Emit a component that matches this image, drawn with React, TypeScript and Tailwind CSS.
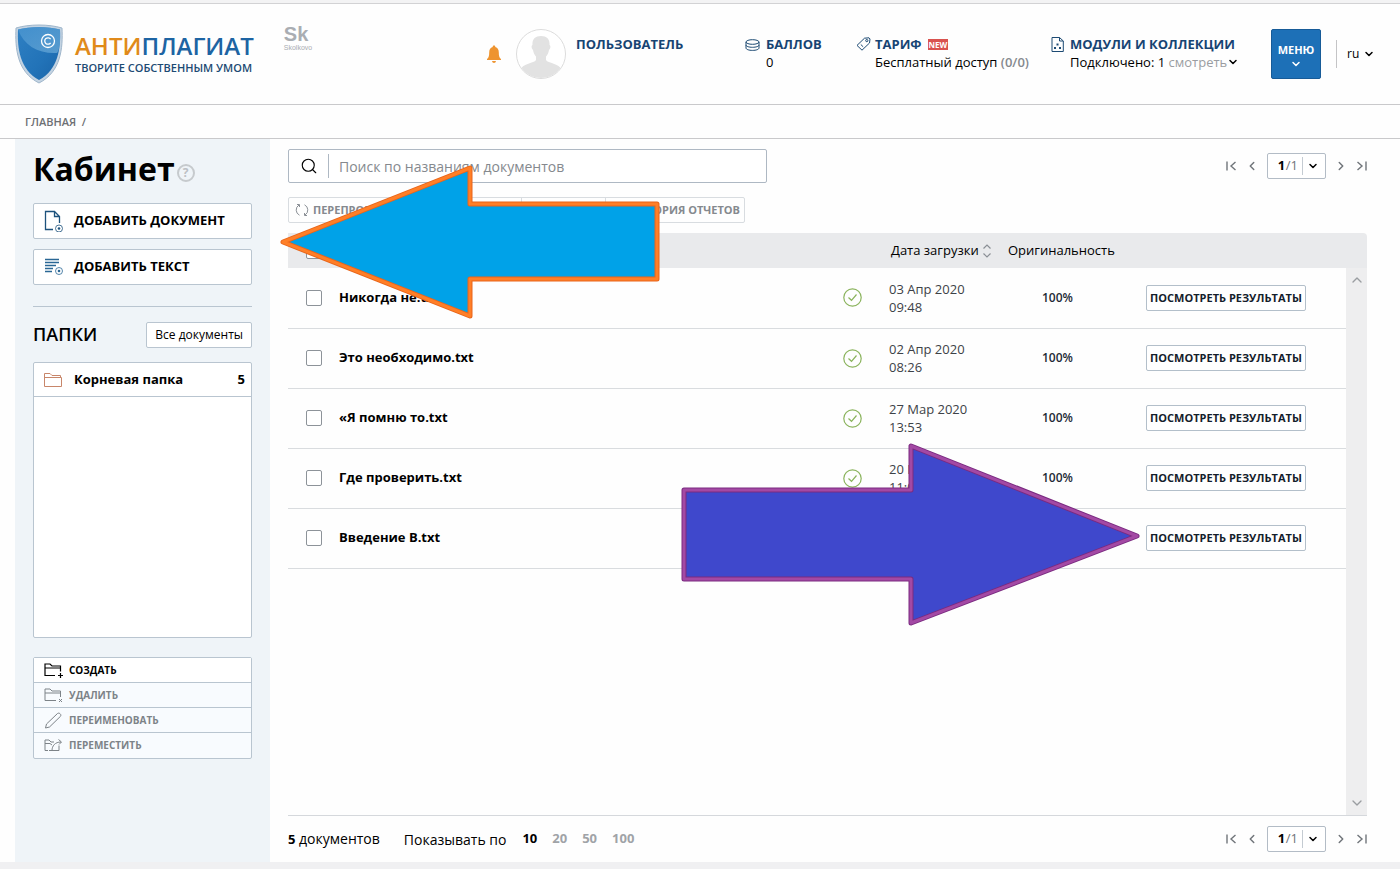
import { useState } from 'react';
import { ChevronDown, ChevronUp, ChevronLeft, ChevronRight, Search } from 'lucide-react';

type Doc = {
  id: number;
  name: string;
  date: string;
  time: string;
  score: string;
};

const docs: Doc[] = [
  { id: 1, name: 'Никогда не.txt', date: '03 Апр 2020', time: '09:48', score: '100%' },
  { id: 2, name: 'Это необходимо.txt', date: '02 Апр 2020', time: '08:26', score: '100%' },
  { id: 3, name: '«Я помню то.txt', date: '27 Мар 2020', time: '13:53', score: '100%' },
  { id: 4, name: 'Где проверить.txt', date: '20 Мар 2020', time: '11:05', score: '100%' },
  { id: 5, name: 'Введение В.txt', date: '20 Мар 2020', time: '10:42', score: '100%' },
];

const checkboxClass = 'block size-4 appearance-none rounded-xs border border-[#8d9399] bg-white checked:bg-[#1d70b7]';

/* ICONS */
const ShieldLogo = () => (
  <svg width="48" height="60" viewBox="0 0 48 60">
    <defs>
      <linearGradient id="shield" x1="0" y1="0" x2="1" y2="1">
        <stop offset="0" stopColor="#2f80c3" />
        <stop offset="0.6" stopColor="#2273b8" />
        <stop offset="1" stopColor="#1a64a8" />
      </linearGradient>
      <linearGradient id="shine" x1="0" y1="0" x2="1" y2="1">
        <stop offset="0" stopColor="#4f9ad4" />
        <stop offset="1" stopColor="#7db8e0" />
      </linearGradient>
    </defs>
    <path d="M1 4C14 0 34 0 47 4C48 24 46 48 24 59C2 48 0 24 1 4Z" fill="#c3d3e2" stroke="#9fb6cb" strokeWidth="1" />
    <path d="M3 5.500C15 2 33 2 45 5.500C46 24 43 46 24 56C5 46 2 24 3 5.500Z" fill="url(#shield)" />
    <path d="M3 5.500C15 2 33 2 45 5.500C45.500 15 45 25 42 29C24 30 9 22 3 5.500Z" fill="url(#shine)" opacity="0.6" />
    <circle cx="33" cy="17" r="6.500" fill="none" stroke="#fff" strokeWidth="1.300" />
    <path d="M35.600 15.200A3.200 3.200 0 1 0 35.600 18.800" fill="none" stroke="#fff" strokeWidth="1.300" />
  </svg>
);

const BellIcon = () => (
  <svg width="14" height="19" viewBox="0 0 14 19" fill="#ee9430">
    <path d="M7 0.500C7.800 0.500 8.300 1 8.300 1.900C10.800 2.500 11.800 4.500 11.800 7.500C11.800 11 12.300 12.600 14 14V15H0V14C1.700 12.600 2.200 11 2.200 7.500C2.200 4.500 3.200 2.500 5.700 1.900C5.700 1 6.200 0.500 7 0.500Z" />
    <path d="M5 16H9C8.800 17.300 8 18 7 18C6 18 5.200 17.300 5 16Z" />
  </svg>
);

const Avatar = () => (
  <svg width="50" height="50" viewBox="0 0 50 50">
    <defs>
      <clipPath id="round"><circle cx="25" cy="25" r="24" /></clipPath>
    </defs>
    <circle cx="25" cy="25" r="24.500" fill="#fff" stroke="#dcdcdc" />
    <path clipPath="url(#round)" fill="#e2e2e2" d="M25 7C31 7 34 10.500 33.500 16C35 16.500 34.500 20 33 21C32.500 24 31.500 26 30 27.500V31C32 34.500 43 34 46 41V50H4V41C7 34 18 34.500 20 31V27.500C18.500 26 17.500 24 17 21C15.500 20 15 16.500 16.500 16C16 10.500 19 7 25 7Z" />
  </svg>
);

const CoinsIcon = () => (
  <svg width="15" height="12" viewBox="0 0 15 12" fill="none" stroke="#1c4a73">
    <ellipse cx="7.500" cy="3" rx="6.500" ry="2.300" />
    <path d="M1 3V6C1 7.300 3.900 8.300 7.500 8.300S14 7.300 14 6V3M1 6V9C1 10.400 3.900 11.400 7.500 11.400S14 10.400 14 9V6" />
  </svg>
);

const TagIcon = () => (
  <svg width="15" height="14" viewBox="0 0 15 14" fill="none" stroke="#1c4a73">
    <path d="M8.500 1.200L13 0.800L14 2L13.500 6L6 13.200L1 8.400Z" strokeLinejoin="round" />
    <circle cx="10.800" cy="3.600" r="1.100" />
    <path d="M4.800 7.500L7.200 9.800" />
  </svg>
);

const ModulesIcon = () => (
  <svg width="13" height="15" viewBox="0 0 13 15" fill="none" stroke="#1c4a73">
    <path d="M1 0.500H8.500L12.300 4V14.500H1ZM8.500 0.500V4H12.300" />
    <g fill="#1c4a73" stroke="none">
      <rect x="5.500" y="6.500" width="2" height="2" />
      <rect x="3" y="10" width="2" height="2" />
      <rect x="8" y="10" width="2" height="2" />
    </g>
  </svg>
);

const AddDocIcon = () => (
  <svg width="20" height="22" viewBox="0 0 20 22" fill="none" stroke="#1d527c">
    <path d="M9 19.500H1.500V1.500H10.500L15.500 6.500V13M10.500 1.500V6.500H15.500" strokeWidth="1.300" />
    <circle cx="15" cy="18.500" r="3.500" strokeWidth="0.800" />
    <circle cx="15" cy="18.500" r="1.300" fill="#1d527c" stroke="none" />
  </svg>
);

const AddTextIcon = () => (
  <svg width="20" height="18" viewBox="0 0 20 18" fill="none" stroke="#2a6795">
    <path d="M1 1.500H15M1 4.500H15M1 7.500H12M1 10.500H9M1 13.500H8" strokeWidth="1.400" />
    <circle cx="15" cy="13" r="3.500" strokeWidth="0.800" />
    <circle cx="15" cy="13" r="1.300" fill="#2a6795" stroke="none" />
  </svg>
);

const FolderIcon = () => (
  <svg width="18" height="14" viewBox="0 0 18 14" fill="none" stroke="#c8866a">
    <path d="M0.500 13.500V0.500H6L8 2.500H16.500V4.500M0.500 13.500H17.500V4.500H0.500" />
  </svg>
);

const CreateIcon = () => (
  <svg width="19" height="15" viewBox="0 0 19 15" fill="none" stroke="currentColor">
    <path d="M11 12.500H1V1H6L8 3H16.500V8.500M1 5H16.500" strokeWidth="1.200" />
    <path d="M16.500 10V15M14 12.500H19" strokeWidth="1.200" />
  </svg>
);

const RemoveIcon = () => (
  <svg width="19" height="15" viewBox="0 0 19 15" fill="none" stroke="currentColor">
    <path d="M12 12.500H1V1H6L8 3H16.500V9M1 5H16.500" />
    <path d="M15 11L18 14M18 11L15 14" />
  </svg>
);

const PencilIcon = () => (
  <svg width="19" height="17" viewBox="0 0 19 17" fill="none" stroke="currentColor">
    <path d="M1.500 16L2.500 12L13.500 1.500C15 0.300 17.800 2.300 16.500 4.300L5.500 15Z" strokeLinejoin="round" />
  </svg>
);

const MoveIcon = () => (
  <svg width="19" height="13" viewBox="0 0 19 13" fill="none" stroke="currentColor">
    <path d="M4 11.500H1V1H5L7 3H10M1 4.500H6L8 6M5 11.500H15V6.500M8 11.500C8 7 11 3 17 3M14.500 0.500L17.500 3L15 5.500" />
  </svg>
);

const RecheckIcon = () => (
  <svg width="14" height="14" viewBox="0 0 14 14" fill="none" stroke="#8a8f95">
    <path d="M4.500 12.200A5.800 5.800 0 0 1 4 2M9.500 1.800A5.800 5.800 0 0 1 10 12" />
    <path d="M2 1.500H4.500V4M12 12.500H9.500V10" />
  </svg>
);

const CheckIcon = () => (
  <svg className="block" width="19" height="19" viewBox="0 0 19 19" fill="none" stroke="#8ab35c">
    <circle cx="9.500" cy="9.500" r="8.700" strokeWidth="1.200" />
    <path d="M5.500 9.500L8.500 12.300L13.500 6.500" strokeWidth="1.200" />
  </svg>
);

const SortIcon = () => (
  <svg width="8" height="14" viewBox="0 0 8 14" fill="none" stroke="#8a8f95" strokeWidth="1.200">
    <path d="M0.500 4.500L4 1L7.500 4.500M0.500 9.500L4 13L7.500 9.500" />
  </svg>
);

const EdgeIcon = ({ flip = false }: { flip?: boolean }) => (
  <svg className={flip ? 'rotate-180' : ''} width="11" height="10" viewBox="0 0 11 10" fill="none" stroke="#70757a" strokeWidth="1.400">
    <path d="M1 0.500V9.500M9.500 1L5 5L9.500 9" />
  </svg>
);

const Pager = ({ id }: { id: string }) => (
  <div className="flex items-center text-[#70757a]">
    <button aria-label="Первая"><EdgeIcon /></button>
    <button aria-label="Назад" className="ml-2"><ChevronLeft size={14} strokeWidth={2.5} /></button>
    <div className="ml-2 flex h-6.5 items-center rounded-xs border border-[#b3bcc6] bg-white pl-2.5 text-[13px]">
      <select id={id} aria-label="Страница" className="w-2 appearance-none font-bold text-black outline-none">
        <option>1</option>
      </select>
      <span>/1</span>
      <span className="ml-1 h-4.5 border-l border-[#c4cbd2]" />
      <ChevronDown className="mr-1.5 ml-1 text-black" size={12} strokeWidth={3} />
    </div>
    <button aria-label="Вперёд" className="ml-2"><ChevronRight size={14} strokeWidth={2.5} /></button>
    <button aria-label="Последняя" className="ml-2"><EdgeIcon flip /></button>
  </div>
);

const Header = () => (
  <header className="flex items-center border-b border-[#c9c9cb] py-5 pr-[25px] pl-[15px]">
    <a href="#" className="flex items-center gap-3">
      <ShieldLogo />
      <span className="block">
        <span className="block text-[24px] leading-7 font-semibold text-[#1d64a3]">
          <span className="text-[#e08a1a]">АНТИ</span>ПЛАГИАТ
        </span>
        <span className="block text-[11px] leading-4 font-semibold text-[#1c4a73]">ТВОРИТЕ СОБСТВЕННЫМ УМОМ</span>
      </span>
    </a>
    <a href="#" className="ml-[30px] self-start text-[#a9adb2]">
      <span className="block font-['Liberation_Sans',sans-serif] text-[20px] leading-5 font-bold">Sk</span>
      <span className="block font-['Liberation_Sans',sans-serif] text-[7px] leading-2">Skolkovo</span>
    </a>

    <div className="ml-auto flex items-center">
      <button aria-label="Уведомления"><BellIcon /></button>
      <div className="ml-[15px]"><Avatar /></div>
      <div className="ml-2.5 flex self-start pt-1.5 leading-[18px]">
        <a href="#" className="w-[169px] font-bold text-[#174473]">ПОЛЬЗОВАТЕЛЬ</a>
        <div className="flex w-[111px] gap-1.5">
          <span className="pt-1"><CoinsIcon /></span>
          <div>
            <a href="#" className="block font-bold text-[#174473]">БАЛЛОВ</a>
            <span className="block">0</span>
          </div>
        </div>
        <div className="flex w-[195px] gap-1">
          <span className="pt-0.5"><TagIcon /></span>
          <div>
            <div className="flex items-center gap-1.5">
              <a href="#" className="font-bold text-[#174473]">ТАРИФ</a>
              <span className="bg-[#d9534f] px-px text-[8px] leading-[11px] font-bold text-white">NEW</span>
            </div>
            <span className="block whitespace-nowrap">Бесплатный доступ <span className="font-semibold text-[#85898e]">(0/0)</span></span>
          </div>
        </div>
        <div className="flex w-[220px] gap-1.5">
          <span className="pt-0.5"><ModulesIcon /></span>
          <div>
            <a href="#" className="block font-bold text-[#174473]">МОДУЛИ И КОЛЛЕКЦИИ</a>
            <span className="flex items-center whitespace-nowrap">
              Подключено: 1&nbsp;<button className="flex items-center text-[#9a9da1]">смотреть<ChevronDown className="text-black" size={12} strokeWidth={3} /></button>
            </span>
          </div>
        </div>
      </div>
      <button className="flex size-12.5 flex-col items-center justify-center rounded-xs border border-[#175b98] bg-[#1d70b7] pt-1 text-[11px] leading-4 font-bold text-white">
        МЕНЮ
        <ChevronDown size={12} strokeWidth={3} />
      </button>
      <div className="ml-[15px] flex h-7 items-center border-l border-[#c4c4c6] pl-2.5 text-[12px]">
        <select aria-label="Язык" className="w-4 appearance-none outline-none">
          <option>ru</option>
        </select>
        <ChevronDown size={12} strokeWidth={3} />
      </div>
    </div>
  </header>
);

const Sidebar = () => (
  <aside className="w-[255px] shrink-0 bg-[#eff4f8] px-[18px] pt-1.5">
    <div className="flex items-center">
      <h1 className="text-[32px] leading-12 font-bold">Кабинет</h1>
      <button aria-label="Справка" className="mt-2 ml-0.5 flex size-[18px] items-center justify-center rounded-full border-2 border-[#c6cacd] text-[12px] leading-3 font-bold text-[#bcc0c4]">?</button>
    </div>

    <button className="mt-2.5 flex h-9 w-full items-center rounded-xs border border-[#b9c5d0] bg-white pl-2.5 font-bold">
      <AddDocIcon /><span className="ml-2.5">ДОБАВИТЬ ДОКУМЕНТ</span>
    </button>
    <button className="mt-2.5 flex h-9 w-full items-center rounded-xs border border-[#b9c5d0] bg-white pl-2.5 font-bold">
      <AddTextIcon /><span className="ml-2.5">ДОБАВИТЬ ТЕКСТ</span>
    </button>

    <hr className="mt-[21px] border-[#b9c5d0]" />

    <div className="mt-3.5 flex items-center justify-between">
      <h2 className="text-[18px] font-semibold">ПАПКИ</h2>
      <button className="h-6.5 rounded-xs border border-[#b9c5d0] bg-white px-2 text-[12px]">Все документы</button>
    </div>

    <div className="mt-3.5 h-69 rounded-xs border border-[#b9c5d0] bg-white">
      <button className="flex h-8.5 w-full items-center border-b border-[#b9c5d0] pr-1.5 pl-2.5 font-bold">
        <FolderIcon />
        <span className="ml-3">Корневая папка</span>
        <span className="ml-auto">5</span>
      </button>
    </div>

    {/* FOLDER ACTIONS */}
    <div className="mt-[19px] divide-y divide-[#b9c5d0] rounded-xs border border-[#b9c5d0] bg-[#f8fbfe] text-[10px] font-bold text-[#7d8388]">
      <button className="flex h-[25px] w-full items-center gap-1.5 bg-white pl-2.5 text-black"><CreateIcon />СОЗДАТЬ</button>
      <button className="flex h-[25px] w-full items-center gap-1.5 pl-2.5"><RemoveIcon />УДАЛИТЬ</button>
      <button className="flex h-[25px] w-full items-center gap-1.5 pl-2.5"><PencilIcon />ПЕРЕИМЕНОВАТЬ</button>
      <button className="flex h-[25px] w-full items-center gap-1.5 pl-2.5"><MoveIcon />ПЕРЕМЕСТИТЬ</button>
    </div>
  </aside>
);

const App = () => {
  const [selected, setSelected] = useState<number[]>([]);
  const [perPage, setPerPage] = useState(10);

  const toggle = (id: number) => {
    setSelected(selected.includes(id) ? selected.filter(s => s !== id) : [...selected, id]);
  };

  const toggleAll = () => {
    setSelected(selected.length === docs.length ? [] : docs.map(d => d.id));
  };

  return (
    <div className="relative flex min-h-screen flex-col border-t-3 border-b-7 border-t-[#f3f3f4] border-b-[#f0f0f2] bg-[#fefefe] font-['Open_Sans',sans-serif] text-[13px] text-black">
      <div className="border-t border-[#d2d2d4]" />
      <Header />

      <nav className="border-b border-[#c9c9cb] px-[25px] text-[11px] leading-[33px] font-semibold text-[#6d7074]">
        <a href="#">ГЛАВНАЯ</a>&nbsp; /
      </nav>

      <div className="flex flex-1 pl-[15px]">
        <Sidebar />

        <main className="flex min-w-0 flex-1 flex-col pr-[33px] pl-[18px]">
          <div className="mt-2.5 flex items-center justify-between">
            <label className="flex h-[34px] w-[479px] items-center rounded-xs border border-[#aeb8c3] bg-white">
              <Search className="mr-2.5 ml-[11px]" size={18} strokeWidth={1.5} />
              <span className="h-6 border-l border-[#aeb8c3]" />
              <input aria-label="Поиск" placeholder="Поиск по названиям документов" className="ml-2.5 flex-1 text-[14px] outline-none placeholder:text-[#85898e]" />
            </label>
            <Pager id="page-top" />
          </div>

          {/* TOOLBAR */}
          <div className="mt-3.5 flex h-[26px] divide-x divide-[#d8dce0] self-start rounded-xs border border-[#d8dce0] text-[11px] font-bold text-[#85898e]">
            <button className="flex w-[130px] items-center gap-1 pl-1.5"><RecheckIcon />ПЕРЕПРОВЕРИТЬ</button>
            <button className="w-[103px]">ПЕРЕМЕСТИТЬ</button>
            <button className="w-[84px]">УДАЛИТЬ</button>
            <button className="w-[138px] pr-1 text-right">ИСТОРИЯ ОТЧЕТОВ</button>
          </div>

          {/* DOCUMENTS */}
          <div className="mt-2.5 flex flex-1 border-b border-[#d5d8dc]">
            <div className="flex-1">
              <table className="w-full table-fixed text-left">
                <thead>
                  <tr className="h-[35px] bg-[#e9eaec]">
                    <th className="w-[51px] pl-[18px]">
                      <input type="checkbox" aria-label="Выбрать все" checked={selected.length === docs.length} onChange={toggleAll} className={checkboxClass} />
                    </th>
                    <th className="font-normal">Название</th>
                    <th className="w-[46px]"></th>
                    <th className="w-[119px] pl-0.5 font-normal">
                      <button className="flex items-center gap-1 whitespace-nowrap">Дата загрузки<SortIcon /></button>
                    </th>
                    <th className="w-[138px] font-normal">Оригинальность</th>
                    <th className="w-[200px]"></th>
                  </tr>
                </thead>
                <tbody>
                  {docs.map(doc => (
                    <tr key={doc.id} className="h-15 border-b border-[#d9dcdf]">
                      <td className="pl-[18px]">
                        <input type="checkbox" aria-label={doc.name} checked={selected.includes(doc.id)} onChange={() => toggle(doc.id)} className={checkboxClass} />
                      </td>
                      <td className="font-bold">{doc.name}</td>
                      <td><CheckIcon /></td>
                      <td className="leading-[18px] text-[#3d4247]">{doc.date}<br />{doc.time}</td>
                      <td className="pl-[34px] text-[12px] font-semibold text-[#1f2a36]">{doc.score}</td>
                      <td>
                        <button className="h-6.5 w-40 rounded-xs border border-[#b3bfca] bg-white text-[11px] font-bold whitespace-nowrap text-[#14202b]">ПОСМОТРЕТЬ РЕЗУЛЬТАТЫ</button>
                      </td>
                    </tr>
                  ))}
                </tbody>
              </table>
            </div>
            <div className="flex w-[21px] flex-col items-center justify-between rounded-tr border-t-[35px] border-[#e9eaec] bg-[#eeeeef] py-1 text-[#9a9da1]">
              <ChevronUp size={16} />
              <ChevronDown size={16} />
            </div>
          </div>

          {/* FOOTER */}
          <div className="flex h-[46px] items-center text-[14px]">
            <span><b className="text-[13px]">5</b> документов</span>
            <span className="ml-6">Показывать по</span>
            <div className="mr-auto ml-4 flex gap-[15px] text-[13px] font-bold">
              {[10, 20, 50, 100].map(n => (
                <button key={n} onClick={() => setPerPage(n)} className={n === perPage ? 'text-black' : 'text-[#a0a3a7]'}>{n}</button>
              ))}
            </div>
            <Pager id="page-bottom" />
          </div>
        </main>
      </div>

      {/* POINTER ARROWS */}
      <svg className="pointer-events-none absolute top-40 left-[278px]" width="384" height="160" viewBox="278 163 384 160" strokeLinejoin="round">
        <path d="M283 242L470 168V204H657V279H470V316Z" fill="#00a2e8" stroke="#e8651a" strokeWidth="5" />
        <path d="M283 242L470 168V204H657V279H470V316Z" fill="none" stroke="#ff7f27" strokeWidth="3" />
      </svg>
      <svg className="pointer-events-none absolute top-[437px] left-[680px]" width="462" height="190" viewBox="680 440 462 190" strokeLinejoin="round">
        <path d="M1137 536L911 446V490H684V579H911V623Z" fill="#3f48cc" stroke="#7a2a80" strokeWidth="5" />
        <path d="M1137 536L911 446V490H684V579H911V623Z" fill="none" stroke="#a349a4" strokeWidth="3" />
      </svg>
    </div>
  );
};

export default App;
